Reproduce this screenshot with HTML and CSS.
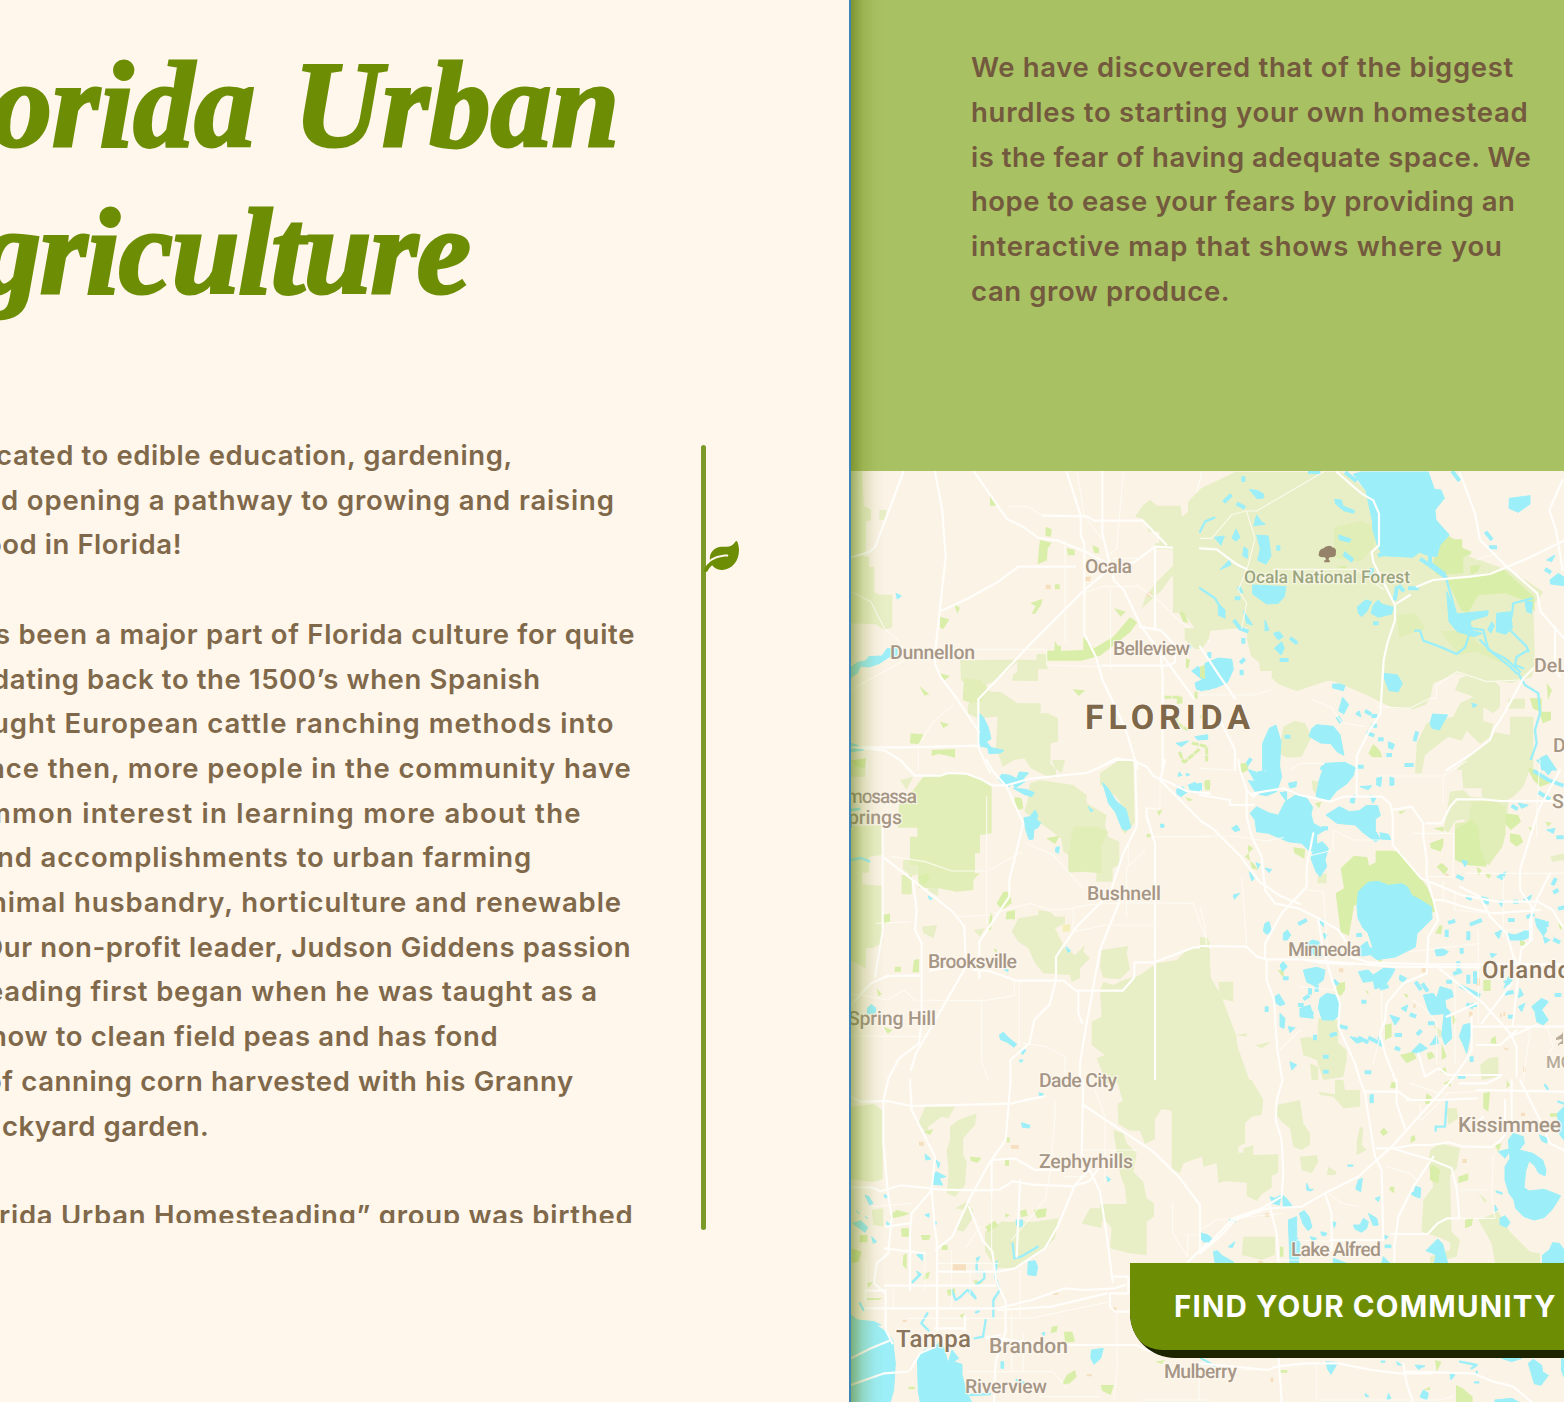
FILE: index.html
```html
<!DOCTYPE html>
<html lang="en">
<head>
<meta charset="utf-8">
<title>Florida Urban Agriculture</title>
<link rel="stylesheet" href="styles.css">
</head>
<body>
<main class="page">
  <section class="story">
    <h1 class="story-title">
      <span class="title-line first">orida Urban</span>
      <span class="title-line second">griculture</span>
    </h1>
    <div class="story-body">
      <div class="story-copy">
        <p class="copy intro">
          <span>cated to edible education, gardening,</span>
          <span>d opening a pathway to growing and raising</span>
          <span>ood in Florida!</span>
        </p>
        <p class="copy history">
          <span>s been a major part of Florida culture for quite</span>
          <span>dating back to the 1500’s when Spanish</span>
          <span>ught European cattle ranching methods into</span>
          <span>nce then, more people in the community have</span>
          <span>mmon interest in learning more about the</span>
          <span>nd accomplishments to urban farming</span>
          <span>nimal husbandry, horticulture and renewable</span>
          <span>Our non-profit leader, Judson Giddens passion</span>
          <span>eading first began when he was taught as a</span>
          <span>how to clean field peas and has fond</span>
          <span>of canning corn harvested with his Granny</span>
          <span>ckyard garden.</span>
        </p>
        <p class="copy group">
          <span>rida Urban Homesteading” group was birthed</span>
        </p>
      </div>
      <div class="scroll-track">
        <svg class="leaf" viewBox="0 0 576 512"><path d="M546.2 9.7c-5.6-12.5-21.6-13-28.3-1.2C486.9 62.4 431.4 96 368 96h-80C182 96 96 182 96 288c0 7 .8 13.7 1.5 20.5C161.3 262.8 253.4 224 384 224c8.8 0 16 7.2 16 16s-7.2 16-16 16C132.6 256 26 410.1 2.4 468c-6.6 16.3 1.2 34.9 17.5 41.6 16.4 6.8 35-1.1 41.8-17.3 1.5-3.6 20.9-47.9 71.9-90.6 32.4 43.9 94 85.8 174.9 77.2C465.5 467.5 576 326.7 576 154.3c0-50.2-10.8-102.2-29.8-144.6z"/></svg>
      </div>
    </div>
  </section>
  <aside class="finder">
    <p class="copy pitch">
      <span>We have discovered that of the biggest</span>
      <span>hurdles to starting your own homestead</span>
      <span>is the fear of having adequate space. We</span>
      <span>hope to ease your fears by providing an</span>
      <span>interactive map that shows where you</span>
      <span>can grow produce.</span>
    </p>
    <div class="map">
      <svg class="map-art" viewBox="851 471 713 931">
        <!-- north west -->
        <g transform="translate(840 460) scale(.33333)">
          <path class="forest" d="M33 33h34l4 105 22 10v32l-16 5v84l-6 20 16 2 1 30h15v75l14 8h40v98l-24 8-26-17-75-3zM118 150h22v30h-22zM885 170l25-35 20-15 22 17h70l6 50 12 3-28 60h50l18-55 42-30v310h-45l-16-20-20-15-5-40-22-10v-45l-20 5-28 40-60 55 10-35 35-45 60-60-5-35-65-5 5-15h12v-35h-32l-6-25-15-15zM360 600l230-1v-17h32v46h-28v35l-78-1 4-20 12-5v-32l-60 55-35 15 15 20h30l50 35h70v30h22l30 15v70l-22 5-1 60 17 20v25l-35-10-40-20-20-30-30 5-35 20-20-60 5-90-60 5-30-15v-20l20-45-40-35z"/>
          <path class="mid" d="M372 655l50 5 22 25-20 40-30 5-26-10z"/>
          <path class="park" d="M450 105l18 20v12h-18zM617 200l18 8-2 22-17-2zM600 240l35 8-12 18-2 35-28 12 4-50zM680 265l24 4v17h-20zM757 255l20 10v15l-15-2zM620 572h55l55-2v-38l32 33 58-35 50-58 22 15-22 30-50 40-40 30-55 15H620zM645 542l8 15h10v18h-20zM822 445l35 10-15 15zM1000 420l25 10 20 60-15-5zM300 470l28 8-18 30-10-6zM343 433l17 10-8 18zM570 430l38-14-5 20-18 25h-10l12-23zM238 678l30 25-15 4zM300 640l30 8-20 15zM698 688l38 3-20 17zM300 785l28 8-18 12zM212 820l38 3-12 30-28-3zM275 870l70-3v27l-20-7-30-5-20 6zM40 900l38-5-5 35H33zM645 373h14v15h-14zM1038 595l12 5-5 25h-7z"/>
          <path class="urban" d="M617 374h15v13h-15zM735 350h18l-3 13h-15zM920 397h14v12h-14z"/>
          <path class="grove" d="M978 712h45v14M1010 745v45l30 18M1015 715v20M1068 700v20M1075 870l-40 35M1020 880l10 25M1060 850l40 10v40M1085 770h15"/>
          <path class="water" d="M33 622l20-15 25-5 8-12 40-2 15-22h30v22l-24 3-30 20-30 10-25-2-10 20-19 13zM168 400l16 8-12 9zM418 760l12 12 15 30 8 35-14 8 15 18 38 8-10 8-35 2-4-18-25-5zM33 850l20 6 18 14-38 5zM1055 633l20-14 8 10 27-28v88h-40l-5-20 22-10zM1008 850l38-7-22 17zM1065 830l38-6v14l-30 2z"/>
          <path class="stream" d="M1110 180l-15 10-12 40-35 45-2 50 18 55 46 28M1052 535l-2 28"/>
          <path class="road" d="M190 36L105 262l-20 15-50 15M285 36l22 115 10 140-12 110-18 160-2 50 17 40 45 60 70 105M403 36l97 140 50 25 45 33 60 8 85 35 60 32M680 36l42 130v60l11 25v270l35 70 20 70 50 105 25 60 30 100M787 36v185l15 60 20 80 30 30 50 105 80 110 80 110M607 167l135 2 20 13h147l70 72M305 452l80-37 90-50 60-45h170M1110 270l-165-10-60 45-80 25-70 58-150 150-170 180v145l35 75M945 265v245M900 500l65 12 40 45v50l-20 10H785M960 560l8 90v280M33 862h170l215-5M780 920l50-25 60 10M45 862l90 10 45 28 30 30"/>
          <path class="lane" d="M507 140h58l42 27M675 240v305M712 36l20 130 60 80M850 36l-20 230-20 15M795 380h95M733 398l62-20M812 390v240M890 375l70 50 60 60 90 60M620 570v45l160 5M205 568h410M33 395l60 30 40 80 45 40M33 690l170-95M340 735l-60 50-45 70v75M820 295h75M1085 36l-30 130"/>
        </g>
        <!-- north east -->
        <g transform="translate(1200 460) scale(.33333)">
          <path class="forest" d="M105 36h305l35 5 75 70 40 100 20 60h100l50 10 40-5 170 60 90 60-30 40 5 180-10 35-60 17-90-8-75-20-70 30-10 48-15 17-35 13-60-3-80-40-100-42h-20l-90 30-55-20-20-20v-20h-35l-2-25-25-20-12-50V502l-110 10-5 25-20 30h-20l-32-28V505h30l-35-50-30 5V195l45-40v-30l40-40zM0 380l60 55 5 40-20-20-45-20zM950 420l50 5v120h-30l-60-40-5-60zM650 850l30-60 80-20 20-40 40-20-55-20 15-35 40-15 50 10 30 30v60l-20 20-30-18v40l30 10-10 40-30 20-40-40-15 30-40-12-70 55-10 55h-20zM240 860l10-60 35-18 30 8 20 40-30 60-45 3-25-15zM790 905l75-60 20-28 45 8v-55h70v160H770zM925 716h50v30h-50z"/>
          <path class="mid" d="M402 202l80-20 45 18-5 60-40 45-80-10zM590 465l55-5 32 45-80 28zM722 513h80l35 40 100 50-30 7-80-35-50 10z"/>
          <path class="park" d="M722 250l25-22 15 10h25v25l28 12-5 10-20 5v50l-80 5-10-40zM742 360l170-30 90 80 3 45-20-30-70-25-80 5-32 55-20-10zM810 318l33-4-10 20-20 10zM0 620l22-8 8 50-30-10zM505 880l15-28 20 20 7 20h-30zM990 715h35v40h28v25l-25 10-10-35-20-10zM1040 670l16 20-12 30zM120 910h28l-10 20zM408 320l30-3v10z"/>
          <path class="water" d="M485 36h200l18 52 20 2 10 25-28 35 3 30 40 45-28 30-10 35-30-5-22-8-20 15-90-5-15-30-15-50v-20l-20-95-38-50zM928 115l62-8v25l-35 25-28-12zM555 250l20-15 10 40-30 10zM148 88l25 4 18 10v12l-20 2zM404 118l20 2 5 18 35 14-3 8-30-8-24-20zM170 165l14 20 12 8-35 4zM108 207l12 25-12 12-12-10zM43 232l30-4-10 28zM170 225l35 3 8 60-15 25-25-12 8-35zM132 260l12 10-2 25-14-8zM88 300l5 15-33 14zM415 225l38 12-5 10-30-8zM434 275l26 20-5 12-25-20zM158 375l100 5-5 30-18 20-35 2-42-30zM472 440l25-20 18 5-15 30-15 15-10-10zM520 435l15-15 10 12 35 10-5 20-40 10-22-12zM55 430l20 20v25l-20-10zM130 452l28 43-18-5zM195 480l12 30-12 3zM15 610l40-16 40 4 5 30-18 40-35 15-47 10-2-15 20-8zM552 640l40 5 15 25-12 25-28-3-15-40zM398 672h22l15 5-5 15-32-8zM428 712l18 22-15 28-15-10zM690 790l8-28 45 3-25 45-22-5zM335 806l15-12 50 5 20 25 12 62-20-10-20-25-30-2-35-20zM188 850l20-45 20-10 15 50-5 85h-50zM365 918l70-10 35 20H360zM740 395l20 45 10 22 95-10-3 15-50 15v28l35 10-25 10-50-15-25-30zM890 460l42-5 5 50-20 18-28-8zM875 485l8 12-10 22-10-10zM975 425h22l-2 35-15-5zM1040 300l25-15-10 20zM1050 360l25-20 17 12v25l-40-5zM220 520l18-5 12 15-15 10zM245 545l8 20-10 20-20-20zM815 730l17 5-12 8zM565 845l18 8-5 15-12-4zM470 758l8-5 5 18-15-8zM1020 895l20-10 30 45h-45z"/>
          <path class="brook" d="M330 36l25 1M440 40l25 20M760 38l15 20M545 100v20M555 280l-15 5M665 300l30 20 40 30M690 280v30l40 30M630 385h20M590 385l-5 30M600 380l8 10M515 330l-3 15M525 490h5M110 415h5M118 385l5 10M130 540v5M130 600l-5 5M125 635v5M130 55v5M90 108l-15 15M115 133l15 8M235 262v4M275 537l12 10M245 600h15M260 830h5M505 820l12 5M540 838h5M565 885h5M620 915h15M500 755l8 5M520 768h6M520 797h5M415 775l5 8M860 220l12 15M873 262h12M650 820l-5 18M1040 330l8 5M28 582v6M150 900l-10 15M105 485l15 20 20 8"/>
          <path class="stream" d="M0 215l15-30 28-12M0 385l45 30 15 25M645 512h15l10 30 55 20 45 20 25-20 20-60M740 360l30 110 10 30 70 10 15 60 50 25 45 40M840 540l40 40 50 40 20 20M985 570l-35 20-5 25 25 10M955 640l20 35 40 25 5 60-15 50 5 40-25 70M935 470l5-40 55-15M930 510l50 50 5 15"/>
          <path class="road" d="M410 36l75 65 35 20 17 40v95l-22 20 5 30 65 130v45l-22 65-12 55-10 160-35 55-35 70v44M590 430l40-25M650 380l50-20 110-10 60-8 120-50 102-50M780 40l45 120 15 80 80 80 92 80 10 55 70 80M1065 500v130l15 20M1088 60l-40 90 20 60 20 120M0 265l50 3 60 45 30 15M1000 625l-30 30-60 110-30 45-10 30-60 45-70 45M0 560l60 90 45 65M50 760l30 60 25 50v60"/>
          <path class="lane" d="M0 235h35l60-70 40-12h35L370 36M140 155l25 80-20 80-30 75 25 40-15 75M220 328h250l80 60M0 705h160l55-15M335 718l60 25 30 45 70 12M530 740l100 5 60-30h20v-40l60-40 90 30 100-5M270 930l30-20h150M830 300l60-20"/>
        </g>
        <!-- middle west -->
        <g transform="translate(840 760) scale(.33333)">
          <path class="forest" d="M33 0h42v50H33zM33 200l92-5v90l-38 5v48h-20v35l60 5v170l-30 17h-20v60l-45-25zM190 300l40-8 28 25-15 25-30 5-25-20zM180 60l40-10-20 40zM270 350l25 10v48l-30-15zM635 0h40l-10 40-20-15zM780 40l60-42h40l4 190-30 35-12-20 30-20-40-70-52-40zM570 70l30-10 100 15 40 30v25l60 35-5 30 10 35 33 15v70l-20 10v40h-50l2-30-100-60-7-40-40-30-70-50 10-35zM246 500l45-5-10 40-30-15zM400 510l35-5-15 25zM515 515l20-40 60-10v-15l35 5 15 15h30v20l-30 15 30 60 30 20 30-30-5 20 20 20-30 30v30l-25 10-5-20-80-5-25-30-20-45-30-20zM785 570l80-12-5 20 10 50-30 30-50-5-10-30zM780 690l10-25 30 10 30-15 50-15 50-35 60-10 30-30 70-25v425H800l-30-75 25-10-40-30v-70l30-15z"/>
          <path class="mid" d="M250 50l70-10 80 5 55 30v145l-35 5v55h-15v60h15l-20 20v30l-50 5-55-10-60-2v-40l-3-140-60 0 5-70h10zM210 230h83v55h-55v30h-28zM185 345h30v58h-30zM700 200h70l35 15-20 40v85l-60-5-40 3v-60l10-50z"/>
          <path class="park" d="M525 110l20 5 5 30-15 5-12-20zM490 395h20l5 35-30 20-15-20zM500 455l25-5v28h-28zM450 460h8l-5 50h-8zM233 350l30-10 5 20-20 18zM130 465l20-5v25l-18 8zM165 620h18v15h-20zM222 600l15-3v40h-20zM110 685l15 18-10 6zM130 800l28 10-15 12zM460 565l12 5-5 10zM950 155l18-8-10 20zM920 222h12v10h-12zM1095 60h15v30h-15zM35 0h40v25l-30-5zM1035 110l25 10-15 4zM618 235l40-8-12 25z"/>
          <path class="sand" d="M668 495l22-3v22l-22 2z"/>
          <path class="water" d="M475 58l10-15 25 3 20 10 8-20 28 3-15 15 5 10-30 20-10-18-8 14-20-8zM520 85l38 3 25 10-8 12-25-8zM570 170l15-20 8 15-3 15 12 8-8 15-12 5-3 30h-12l-10-30-5-35zM788 68l15 15 25 40 30 25 15 55-15 8-12-5-20-50-20-25zM745 140l15 12-8 3zM648 262l10-2-2 20-10-5zM962 192l10 2v8h-10zM1010 88l18-8 15 15-20 15-12-8zM1045 75l20-8 18 15-5 12-25 2zM265 408l12 8-8 3zM678 560l14 12-8 6zM492 628h12v8zM82 745l12-12 14 12-3 15-22 2zM478 825l12-8 20 20 20 15-8 10-20-15-20-8zM540 868l18 2-10 14zM538 900h12l-8 8zM1018 36l8 10-12 3zM1038 40l12 4-10 4z"/>
          <path class="stream" d="M33 300l30-6 25 10M33 150l25-3"/>
          <path class="road" d="M180 0l45 47 75 0 25-8 55 2 40 15 35 20h45l70-20 170-17 90-39h45l45 20 20 28 50 20 50 25 70 8M440 0l20 35 40 45 50 110-42 170v50L418 545v110M128 195v320L105 650M33 735l60-65 50-22 100-2M218 360l12 90-5 60 20 40v230l-8 70-60 45-32 62M128 290l90 70 120 95 35 45 5 120-150 260-15 50M270 632l55-10M400 630l45 2 85 30h140l38 30h140l35-40v-45h60l120-45h47M885 0l5 150v50l-40 80-40 120-100 100-62 90v70l-20 75-45 45-15 70-57 50v62M960 60l125 125 25 15M840 420l-60 150-40 220-20 120v50M920 145v25l25 80v710M975 0l-13 55M715 690v70l12 30"/>
          <path class="lane" d="M82 0v50M155 290l100 15 80 28 110 0 100-58M440 110v380M700 445l-70 5-60-20-60 15-60 20-100 5M700 515l100-20 145 0M945 230h165M865 250v70l50-50M860 320v150M1060 430l-200-2-100 5-60 10v70M110 490l100-5M33 700l110 20 50-30 30 30 120 2 90 0 90-15v-45M425 715v190l20 55M33 828l230 2M550 850l70 10 55 30v70M560 250l80 35 90 100M920 145h40V60M1060 430l35 100M220 750h90M538 660v200"/>
        </g>
        <!-- middle east -->
        <g transform="translate(1200 760) scale(.33333)">
          <path class="forest" d="M785 35l25-35h190l-30 80-30 30-60 30-30-10-5-30v-15h-55zM750 95l40-5 20 20 100 8 15 10-5 60-70 60-60-70-25 5-20 35-15-10 5-20zM335 60l20 5-5 40-12-15zM355 345l25-5v30h-28zM0 530l25 5 8 120 30 50 45 120 5 35 35 100H0zM55 665h45v60l-40-10zM355 775l60 5v70l25 20v30l-10 50-60 10-20-60-40-15-10-50 30-5 22 10zM330 910l25 10v40h-20zM105 825l35-5v10zM165 855l50-10-30 20zM700 795l30 20-10 20zM840 915l25-20 30-5v60l-50 10zM1050 290l42-10v20l-35 5z"/>
          <path class="mid" d="M765 190l40-5 10-60 60-5 42 20v80l-10 40-40 55-30-10-10-100-62 10z"/>
          <path class="park" d="M407 400l25-15-10-60 40-38 40 5 5 25 20-10v-35h50l25 5 40 50 40 55 30 70-60 20-40-35-80-30-70 30-15 90-25-10zM765 210l50-30 20 20 5 60 20 60-60-5-35-15zM915 160l40 5 8 20-30 25-15-15zM930 220l30 5 10 20-20 15-20-15zM690 250l40-15v20l-8 20-30-10zM710 320l15-12 20 18-12 18zM830 320l15 10-10 18zM855 340l20 5-10 12zM700 205l30-5v15zM985 30l15 30 20 20 30-10-60-50zM145 255l15 10-25 25 25 20 15 20-20-5-12-60zM280 262l35 5-2 30-30-18zM233 630h18v25zM415 670l20-5v25l-12 18-20-10zM555 795l20-5v40l-20 10zM720 495l8 3-5 25-18-3zM755 760l15 20-10 15zM600 885l40-10 10 20-30 15zM680 880l15-5 10 15-20 10zM725 850l15 40-15 10zM720 935l15-15 8 25zM850 660h22v33h-22zM960 540l15 5v15l-15-5zM1075 490l15 10-10 10zM610 700l15 5-5 10zM120 15l20-5 5 20-20 10zM345 130l20-5-8 20zM595 155l25-4-20 12zM12 65l20 5-3 15-15-3zM1035 185l20 3-10 12zM985 200l15 5-5 15zM875 835l12-8 2 25-18-3zM495 690l10 5v10zM533 595l15 5-10 8z"/>
          <path class="urban" d="M665 625h13v12h-13zM417 625h13v12h-13zM828 655h12v22h-12zM807 755h10v15h-10zM900 760h5v12h-5zM910 757h6v12h-6zM640 733h7v10h-7zM738 338l12 10h-14zM910 862l18 5-10 5zM970 920h7v15h-7z"/>
          <path class="water" d="M190 0h45l10 50-15 45-30 12-30-5-25-40 20 2-20-35 25 8 20-5 10 5zM375 10l60-3 30 15-5 25-20 25-30 20-25 32-37-15 10-50zM150 160l20-20 35 18 30 8 20-40 30-20 35 8 18 28-5 20 7 28 35 20-25 15v40l-20 10-25-25-40-5-60-25-35-5-5-35zM345 255l22-10 18 20-10 35 5 20-20 30-12-15-15-40zM378 165l40-25 30 15 30-3 20-15h35l8 30-15 10v35l15 25-15 8-40-30-20-20-55-5zM540 218l25 5 8 16-30-2zM475 395l30-28 30-3 30 12 40-5 18 10 12 25 28 15 32 20 1 35-45 45-5 40-60 30-55 8-20-15-30 5-5-25 25-20 8 20h10l-15-45-15-15-15-30-3-35zM310 630l40-8 25 8-5 30-25 18-25-12zM360 715l20-15 25 5 12 20v40l-15 15h-35l-12-35zM475 635l30-5 15 15 30-20 35 2-10 20-20 30-30 10-5-25-30 5zM600 645l20 10-10 12-12-8zM670 705l30-5 10 15 10-35 35 10 5 20-25 10 5 40-50 5zM735 740l15 15 5 80-20 20-10-30zM790 795l20-5 2 35-12 55-12-30-10-20zM710 825l5 25-25 5zM635 875l25-25 22 15-30 15zM535 830l15 30-15-5zM450 830l50 10-30 10zM995 740l30-25 20 10-20 25 20 30-15 15-20-10-5-30zM955 740l20-10-10 25zM960 685l10 20-15 8zM910 665l25-10-5 20zM225 710l12-8 18 30-15 5-12-8zM300 745l30-10 10 40-40-5zM240 760l15 15-3 30-12-5zM265 800l20 3-15 15zM250 520l12-10 10 15-10 15h-12zM195 490l12-5 8 30-15 8-10-10zM355 480h15v20zM370 520l12 5-8 12zM322 550l15-10 20 5v25l10 20h-20l-20-20zM240 615l10-10 12 15-15 15zM265 70l25-5-2 15-18 4zM240 98l20-3v30zM530 55l15-5-3 30-12-5zM570 50l12 5v20l-12 2zM480 80l35-3-10 12zM455 110l12-5-5 25-12-3zM510 105l18 10-10 15zM95 205l15-10 10 15-15 5zM195 325l20 3-8 10zM148 335l15 20-8 8zM168 308l12 5-6 12zM100 405l18-5-15 18zM270 905l20 10-15 15zM890 350l28-15-10 25zM785 300l18 5-8 15zM845 410l20 5v18l-18-5zM895 425l15-5-5 20zM970 420l25-15-8 20zM1005 475l30 8 5 30-10 15-20-30zM885 520l20-10-8 25zM920 520l25 5 25-10 20 15-20 10h-40zM970 512h25v12h-25zM705 570l20-5 20 10-10 10-25 3zM870 580l20 3-15 10zM1030 530l20 10-15 10zM885 520l12-5-2 20zM925 650l12 10-25 25zM1010 0h25l20 30-10 15zM1040 210l25-5-5 15zM955 130l30 5-20 10zM570 765l30 10-15 20zM603 745l20-10-5 20z"/>
          <path class="brook" d="M475 525h5M300 490l15-8M750 487l10-3M815 492l25-10M740 515v10M805 520v15M775 350l10 5M805 412l5 3M930 480h8M945 425h5M985 470l12-5M1040 490v5M1065 540l10 5M785 570v5M775 610v25M765 640l15-5M805 650v15M825 640v25M745 665h5M650 670l10 15M680 690l-10-15M785 680l20 10 30 15M315 715l8-5M330 690v8M350 680v10M300 735h5M315 760h20M200 745v5M405 665l5 5M425 800l12 3M395 825l10-3M345 835v-5M375 890h5M375 935h5M500 937h8M490 725h3M545 685l15-5M590 825h10M590 865l5 2M655 820l5-5M690 790h8M635 765l8 3M805 735l10 5M820 735h5M930 770h5M1070 705h8M920 700l15-3M815 895v5M780 950h10M480 835l20 10M510 835l20 10M255 655h5M370 205h8M620 15h12M475 20h10M1060 370l5-10M1065 395l5-3M1080 445l8-2M1020 100l25 15M940 140l8 5M1005 35l40 25 40 15M1075 232h10M0 75v10"/>
          <path class="road" d="M115 0l5 30 20 60 20 20 15-10h-15l90-15 50 20 90 20 40-15h115l25 20 8 35v90l60 70 25 30 50 20 70 30 110 20h120l45 25 30 50M470 0v105M140 90v80l15 60 30 60 10 100 30 40 70 15 60 30 60 35 40 60 10 20M0 105l90 15v15h70M0 182l40 25 80 80 60 80 60 40 60 25M450 590l60 18 180 5h402M330 600l250 20 260 2M0 558l140 2 30 30 30 8h110l50 10 100 5M200 600v60l22 60 10 150 15 90M355 480l15 90 20 70 30 90-5 70 50 110 15 50M195 595v-45l50-90 75-80v-60l20-100M680 190l45 0 25-50 20-22h80l50 5h190M670 190v40l10 70v50l20 70 15 60-30 50-5 110-70 30-50 60-5 50-15 40 15 60 35 90M575 150l60-10 35 50M700 420h30l60 20 90 20 70-5 70-5M780 380l60 30 30 60 50 50 20 70 25 40M960 330l40-130 20-60 60-110M960 330v60l35 50v100l-30 25M1050 340l-40 80-20 60v60M710 620l140 110 80 90 20 40v90M830 730l-90 40M845 790l90-120M815 800h280M930 830l80-35M830 855h70l50-45M938 800l25-230M815 770v100l-20 35-40 55M655 880l20 70 40-25 30 20h160"/>
          <path class="lane" d="M530 48h200l70-45M730 50v80M640 220h120v130h-80M800 340h290M0 228h100l100 15 50-10M320 290l80-20v-60l60 30h80M320 390l50 5 15 200M0 440l15 60 5 60M125 350l15 200M1020 0l-10 150v80M910 350v180M730 365v60M765 390v60l110 10M835 510v280M765 670v240M545 690v120l-25 100M300 680l110 10M630 575l210-25M910 510h90M990 810l-20 150M1040 800l20 60-15 20M640 720l40 30 30 40v120M240 870l60-60M0 25l100 5"/>
        </g>
        <!-- south west -->
        <g transform="translate(840 1080) scale(.33333)">
          <path class="forest" d="M33 80l70-8 25 20v205l-30 10-65-10zM235 130l20-50h90l-20 35-20-5-40 30v25zM330 140l25-20 55-20-5 35-35 40v50l10 20-5 70-30 35-25-10 5-50v-30l-5-50 10-30zM345 385l35-20 20 25-5 30-25 35-20-5 20-60zM435 455l50-30h100l70-10-10 60-30 30-60 40-30 20-60-2-30-50zM830 0h280v200l-25 30-55 20-10 30-25-15V92l-30-5-20 30v60l-30 15-15-40-30 0-35-20-2-60 15-10zM820 150l30 10 10 30 30 30-10 55 30 30 10 50 22 15v40l-22 15v100l-50-5-60-15 5-60-15-20-45-8 5-20h20v-25h80l-5-50-15-40zM725 430l25-45h35v60zM95 390l35-5v55l-30-5z"/>
          <path class="park" d="M150 405l20-15 40 10-20 8-40 8zM183 445h24v25h-22zM242 465h30l-5 15h-20zM190 525l10-5v50l-12-15zM390 230l35 3-12 15-20-5zM497 170l12 3v15l-12-3zM495 240h12v18h-12zM540 393l18-5 5 20-20 3zM580 390l40-5-3 25-25 5zM320 630l25-5v20l-20 2zM400 600l30 5-20 15zM80 655h50l-15 5H80zM635 740l18-3-3 18-18 5zM672 755h25l8 30-30 3zM680 885l25-15 5 20-20 20-25 5zM782 915h40l-10 30-25-12zM945 845l30-5-10 12zM35 505l30 10-10 30-20 5zM60 465h22v22H58zM255 580l15-5-5 20-15 5zM205 920h20v8h-18zM305 495h18v15h-18zM360 705l12-5-5 20zM435 440l30-18 10 15-30 20zM82 610l18-5-15 18zM495 400l15 5-13 8zM250 155l30-8-10 18z"/>
          <path class="urban" d="M338 553h40v23h-40zM513 195h23v11h-23zM237 185h14v12h-14zM820 682h9v14h-9zM640 638h15v6h-15zM740 883h16v6h-16zM188 720h12v6h-12z"/>
          <path class="water" d="M33 735h75l30 20 20 25 8 70-5 80-10 36H33zM232 835l20-25 35-10 15-20 12 30 10 40 12-40 20 25-15 10 25 8v30l12 50 20 40v13H245l-10-50zM33 705l20 15 50 5 20 10-90 2zM565 545l20-3 8 18-5 27-25-3zM755 810l35-5-8 30-20 18-10-20zM545 128l25 8-3 8-20-2zM255 222l18 15-15 3zM288 240l12 10-5 15zM278 290l10-15 30 15-20 5 10 20-30-2zM75 345l12 5 12 20-10 5zM132 343l15 8-12 3zM255 405l12-5v12zM280 422l10 5-5 12zM140 425l10 8-8 8zM38 430l25-8 20 20-8 15zM48 392l12 10zM75 410l8 5zM95 470l15 15-10 5zM230 525l18-8v25zM215 605l20-20-5-12 15 10-15 15-12 12zM408 535l12-5-8 15zM1085 460l25 10v20l-20-5zM800 290l12 8-8 8zM597 38l15 5-12 8zM528 420l20 0v20l-18-3zM483 845h8v20h-8zM605 760l10-3-3 10zM330 895l10-5-10 30-8-5z"/>
          <path class="stream" d="M518 490l5 45 20-5 50-30M470 545l-5 45 15 40-20 30v50M262 700l-18 30 22 22M335 630l12 30 15-10 20-20 25 25M437 720l-8 50-25 5M390 630l15 20M408 575h25l0 20-25 20M60 670l10 20M408 697l8-3M390 945l60-3M530 900l25 10M410 550v20"/>
          <path class="road" d="M33 50l30 15 80-2 70 15 300-7 50-12 50-10M145 0l-15 60v130l15 160 10 60-10 110-35 30-8 60 35 30v110l20 40M210 0l5 90 70 140-10 100 8 100 8 60v260M33 322h60l30 12 60-18 80 8 35 5 110 2 70-2 40-25 60 10 120 5 50-15 35-50M275 330l-60 70-5 60v170M512 0l-15 180-50 70-60 110-50 110-50 40M455 240v100M455 240l70-5 60 35h90M387 380l40 100 30 35 12 90 28 60v90l-30 90-5 120M295 575h180l50-10 90-60 40-70 50-120 40-45M730 0l-5 220 55 115 20 130 18 140M730 75l210 140 80 80 60 80v145M33 835l60-30 60-25M33 915l100-35 70-5M75 685h400l100-25 100-35 60 5 90-5 30-10M78 632h60M135 617h330M255 520l-120-15M480 765l-40 10M440 770l180 25h270l30 15 30 10M820 590h45v50h-55v40l15 15h40M1045 545l65-65M210 870l30-50 45-20M540 300l-10 230M138 440l70-10M475 690l160-10 165-40M285 745h90M375 710v40"/>
          <path class="lane" d="M455 330v190M645 60v50l-15 170-15 80-100 120M765 30l30 80v200M675 290h65M730 210h160M998 370v90l45 70v-65h70M78 545v120M205 715h365l240-50M335 515v170M540 570v140M830 700l2 160-10 100M95 380l120-10M380 500l40-60M515 700v170M380 875h260l40 50M600 950h180M1110 960H900M160 630v50M255 520v110M550 760v110M75 630v30M295 550h180M390 580v60M1078 880v80"/>
        </g>
        <!-- south east -->
        <g transform="translate(1200 1080) scale(.33333)">
          <path class="forest" d="M0 0h155l35 60-5 45-30 5-20 20v60l-20 10v90l-60 20-5-60-40 10-10-80H0zM130 205l30-10v30l75-2v55l-20 10v35l-30 20-15 20-30-15v-40l-75-5-10-60 20-25h55zM230 75l70-15 10 70 20 30v35l-25 15-25-10-10-55-25-20-15-20zM300 230l50-5 5 20-20 35-30-10zM355 35l50 8v-43h25l5 30h45v50l-50 5-30-35-40-5zM385 260l25 15-5 10h-25zM480 140l10 5-5 50 15 15-30 15v-40zM690 210l30-20 60 15-10 60-20 20 5 180 10 30-40-20-60-20 5-95 30-40-15-70zM130 470h95v55l-40 15-60-15zM740 85h30l5 30-30 20zM835 420l60-25 35 60 60 60 30 5v30H885l-10-60zM835 340l25 20-5 10zM690 550v-20l60-20v-60l30 30-10 50z"/>
          <path class="park" d="M540 155l12-12 12 15-15 10zM632 170l12-5 3 15-15 10zM680 40l15 10-5 25-15-5zM730 10l20-10 3 20zM850 40l20-5-5 60-15-10v-20zM885 195l20-5-10 25zM835 260l-3-5zM570 320h13v20l-15-10zM575 5l20 5-5 15h-20zM795 420l25-8-5 25-20 8zM240 870h22v8h-22zM705 840l20 5-15 30zM920 0l10 15-10 10zM690 260l10-5 20 15-5 40-25-10zM775 290l30-10v20l-30 10zM670 930l20-10v10zM768 915l20 10 30 25v16h-50zM240 500h10v30h-10zM1050 100h22v10h-22z"/>
          <path class="urban" d="M787 237h13v12h-13zM195 400h12v10h-12zM963 98h12v10h-12zM212 892h8v15h-8zM175 543h14v8h-14z"/>
          <path class="water" d="M925 180l15-20 30 10 3 20-15 20 40 10 30 20 10 30-3 18-20-10-10-20-18-15-10 30-5 50 15 10 45-5 40 15 10 5-25 40-25 25-30 7-30-10-25-25-5-25-15-20-12-40v-40l15-25zM895 215l40-10-20 30zM1072 100l20-20v100l-12-15zM1018 165l25 10-3 15-15-8zM1028 525l20-15 10-22 20 2 14 20v40h-65zM678 512l35-35 15 15 15 57h-40l5-25zM900 415l15-8 15 20-10 15-20-8zM630 340l12-3 5-18 15 5-2 30-15-5zM460 435h20l10-20 15 10-5 20-15 12-20-10zM505 400l25 15 5 20-15 2zM298 400l15-8 15 20 8 30-12 10-15-20zM265 420l25-10v60l10 20-5 60h-25zM210 350l15 5 18-10-5 30-20-5zM248 345l15 15 15 20-28 2zM320 310l8 18h12l-8 5-12-3zM475 300l12-5-5 40-15-8zM5 460l20 5 15 15-5 10-30-10zM40 515l12-3 15 15 35 20H45zM85 500l20-15-8 18zM363 455l18 5-5 8-12-3zM398 425l10 3-5 15zM330 470l20 5-10 10zM400 535l40 15h-40zM550 530l20 20h-25zM550 465l15 5-8 8zM510 45l10-2v25h-10zM378 845l35 3-20 35-10-15zM985 850l15-12 25 18 3 20 17 10-22 30-20-5zM1085 835l7 5v50l-8-20zM905 835h60l-30 10zM670 930l15 10-5 20-20-10zM885 960l50-5 20 11h-70zM645 855l30 3-20 10zM750 880l15 5-12 15zM495 940l12 10h-10zM565 940l8 15-12 5zM590 845l15 10h-12zM0 835l45 25-10-10-25-13zM525 355l15-5-5 15zM555 495h18v8h-18zM885 375l8 15-8 5z"/>
          <path class="stream" d="M740 65l-5 75-28 0v12M890 335l15 5M445 257h12M1035 15l8 12M1075 65l15 5M780 845l50 10-15 10M830 875v10M825 907h10M545 845h8M90 420l15 3"/>
          <path class="road" d="M248 0l-18 60-3 60 18 60 5 100-5 70-60 35-85 30L0 520M0 520l60-50 45-50 100-35 100-5 70-40 100-50 100-90 180-200M480 0l15 40 30 190 20 40 5 210M495 35h100l35 25M590 0v70l25 75M620 60l90 0 120-5M780 10h80l40-20M530 205h50l60-10h55l50-8 40 12 90 2 20-15 20-20M575 205l120 35 60 25 15 60 8 90h-35l-30 15-30 32h-110M700 230l-60 90-45 90-12 90v45M960 0l40 80 30 60 20 50 40 20M375 340l20 60v110M210 380l20 80 5 85M935 0v120M915 130V60M850 110l-20 20M0 850l205 20 20-10 90-10 100 0 100 20 80 10h100M235 820l10 146M610 850l10 60 20 60M620 875l200 5 60 25 60 15 60 50M390 480h160M830 30l262 5"/>
          <path class="lane" d="M630 10l90 30 180-10M660 70v50M780 330h80M385 340l40 30 50 10M350 850v110h370l40-10M0 450l50-30 200-20M290 480l110 5M650 300l-20-20-70-20M775 415h110l-10-70 5-120M0 870h200M665 120l80-80M230 540h70"/>
        </g>
        <!-- forest marker and airport -->
        <path class="tree" d="M1320 554c-1-3 2-5 4-5 2-3 7-3 8-1 3 0 4 3 3 5 1 3-3 4-5 3l-2 2v3h1v.5h-4v-.5h1.500v-3l-3-2c-2 1-5 0-4-2z"/>
        <path class="plane" d="M1563 1032v12h-3l-2 2v-2l4-3v-2l-6 1v-2l6-4z"/>
        <g class="place">
          <text x="1085" y="572.5" textLength="47">Ocala</text>
          <text class="woods" x="1244" y="583" textLength="166">Ocala National Forest</text>
          <text x="890" y="659" textLength="85">Dunnellon</text>
          <text x="1113" y="655" textLength="77">Belleview</text>
          <text class="state" x="1085" y="729" textLength="165">FLORIDA</text>
          <text x="846" y="803" textLength="71">mosassa</text>
          <text x="848" y="824" textLength="54">prings</text>
          <text x="1534" y="672">DeL</text>
          <text x="1553" y="752">D</text>
          <text x="1552" y="808">S</text>
          <text x="1087" y="900" textLength="74">Bushnell</text>
          <text x="1288" y="955.5" textLength="73">Minneola</text>
          <text class="city" x="1482" y="978" textLength="89">Orlando</text>
          <text x="928" y="968" textLength="89">Brooksville</text>
          <text x="848" y="1025" textLength="88">Spring Hill</text>
          <text x="1039" y="1087" textLength="78">Dade City</text>
          <text class="airport" x="1546" y="1068">MCO</text>
          <text class="wide" x="1458" y="1132" textLength="103">Kissimmee</text>
          <text x="1039" y="1168" textLength="94">Zephyrhills</text>
          <text x="1291" y="1256" textLength="90">Lake Alfred</text>
          <text class="city" x="896" y="1347" textLength="75">Tampa</text>
          <text class="town" x="989" y="1353" textLength="79">Brandon</text>
          <text x="965" y="1393" textLength="82">Riverview</text>
          <text x="1164" y="1378" textLength="73">Mulberry</text>
        </g>
      </svg>
      <a class="find-button" href="#"><span>FIND YOUR COMMUNITY</span></a>
    </div>
  </aside>
</main>
</body>
</html>
```
FILE: styles.css
```css
* { box-sizing: border-box; }

body {
  margin: 0;
  background: #fff6ec;
  overflow: hidden;
}

.page {
  display: grid;
  grid-template-columns: 849px 715px;
  height: 1402px;
  overflow: hidden;
}

.story {
  overflow: hidden;
  padding-top: 31px;
}

.story-title {
  margin: 0;
  height: 402px;
  color: #6d8e04;
  font: italic bold 122px/147px "Liberation Serif", serif;
  -webkit-text-stroke: 3px #6d8e04;
}

.title-line { display: block; white-space: pre; }
.title-line.first { margin-left: -9px; letter-spacing: 0; word-spacing: 8px; }
.title-line.second { margin-left: -20px; letter-spacing: -1.2px; }

.story-body {
  display: grid;
  grid-template-columns: 701px 40px;
}

.story-copy {
  height: 790px;
  overflow: hidden;
}

.copy {
  margin: 0;
  color: #80694a;
  font: 600 27.5px/44.7px Inter, sans-serif;
}

.copy span { display: block; white-space: nowrap; }
.copy + .copy { padding-top: 44.7px; }

.intro span:nth-child(1) { margin-left: -4px; letter-spacing: .6px; }
.intro span:nth-child(2) { margin-left: 1px; letter-spacing: .85px; }
.intro span:nth-child(3) { margin-left: -15px; letter-spacing: .55px; }

.history span:nth-child(1) { margin-left: -5px; letter-spacing: .7px; }
.history span:nth-child(2) { margin-left: -8px; letter-spacing: .6px; }
.history span:nth-child(3) { margin-left: -8px; letter-spacing: 1px; }
.history span:nth-child(4) { margin-left: -12px; letter-spacing: .9px; }
.history span:nth-child(5) { margin-left: -14px; letter-spacing: 1.25px; }
.history span:nth-child(6) { margin-left: -3px; letter-spacing: .87px; }
.history span:nth-child(7) { margin-left: -10px; letter-spacing: .88px; }
.history span:nth-child(8) { margin-left: -18px; letter-spacing: .6px; }
.history span:nth-child(9) { margin-left: -13px; letter-spacing: .83px; }
.history span:nth-child(10) { margin-left: -10px; letter-spacing: .65px; }
.history span:nth-child(11) { margin-left: -15px; letter-spacing: .63px; }
.history span:nth-child(12) { margin-left: 2px; letter-spacing: .5px; }

.group span { margin-left: -1px; letter-spacing: .75px; }

.scroll-track {
  width: 4.5px;
  height: 785px;
  margin-top: 11.5px;
  padding-top: 95px;
  border-radius: 3px;
  background: #7b9a27;
}

.leaf {
  display: block;
  width: 35px;
  height: 33px;
  margin-left: 2.5px;
  fill: #6d8e04;
}

.finder {
  position: relative;
  display: grid;
  grid-template-rows: 471px 931px;
  border-left: 2px solid #3f86b8;
  background: #a8c162;
  overflow: hidden;
}

.finder::after {
  content: "";
  position: absolute;
  inset: 0 auto 0 0;
  width: 34px;
  background: linear-gradient(90deg, rgba(85, 105, 0, .5), rgba(110, 130, 20, .22) 35%, rgba(130, 140, 50, .06) 70%, transparent);
}

.pitch {
  padding: 45px 0 0 120px;
  color: #73593d;
  line-height: 44.8px;
}

.pitch span:nth-child(1) { letter-spacing: .65px; }
.pitch span:nth-child(2) { letter-spacing: .76px; }
.pitch span:nth-child(3) { letter-spacing: .5px; }
.pitch span:nth-child(4) { letter-spacing: .5px; }
.pitch span:nth-child(5) { letter-spacing: .77px; }
.pitch span:nth-child(6) { letter-spacing: .6px; }

.map { position: relative; background: #fbf3e6; }
.map-art { display: block; width: 713px; height: 931px; }

.forest { fill: #e8efc6; }
.mid { fill: #e1eeb8; }
.park { fill: #d9eea8; }
.urban { fill: #f5dfbf; }
.sand { fill: #f3efb8; }
.water { fill: #9ceff8; stroke: #9ceff8; stroke-width: 3; stroke-linejoin: bevel; }
.stream, .brook, .road, .lane, .grove { fill: none; stroke-linejoin: round; stroke-linecap: round; }
.grove { stroke: #d9eea8; stroke-width: 9; stroke-dasharray: 12 12; stroke-linecap: square; }
.stream { stroke: #9ceff8; stroke-width: 7; }
.brook { stroke: #9ceff8; stroke-width: 12; stroke-linecap: square; }
.road { stroke: #fffefb; stroke-width: 6.5; }
.lane { stroke: #fffcf6; stroke-width: 3.5; opacity: .8; }
.tree { fill: #96826a; stroke: #96826a; stroke-width: 1.5; }
.plane { fill: #b8aa98; }

.place {
  font: 500 19.5px Roboto, sans-serif;
  fill: #a69686;
  stroke: rgba(255, 250, 242, .7);
  stroke-width: 2.5px;
  paint-order: stroke;
}

.place text { text-rendering: geometricPrecision; }
.place .woods { font-size: 17.5px; fill: #9ba67e; }
.place .state { font-size: 34px; font-weight: 700; fill: #7f674a; }
.place .city { font-size: 24px; fill: #8b765d; }
.place .town { font-size: 21px; }
.place .wide { font-size: 21px; }
.place .airport { font-size: 17px; fill: #b8aa98; }

.find-button {
  position: absolute;
  left: 279px;
  top: 792px;
  width: 480px;
  height: 95px;
  border-radius: 0 0 0 45px;
  background: #1d2500;
  overflow: hidden;
  color: #fff;
  font: 700 29.5px/87px Inter, sans-serif;
  letter-spacing: 1.15px;
  text-decoration: none;
  white-space: nowrap;
}

.find-button span {
  display: block;
  height: 87px;
  padding-left: 44px;
  border-radius: 0 0 0 32px;
  background: #6d8e04;
}
```
